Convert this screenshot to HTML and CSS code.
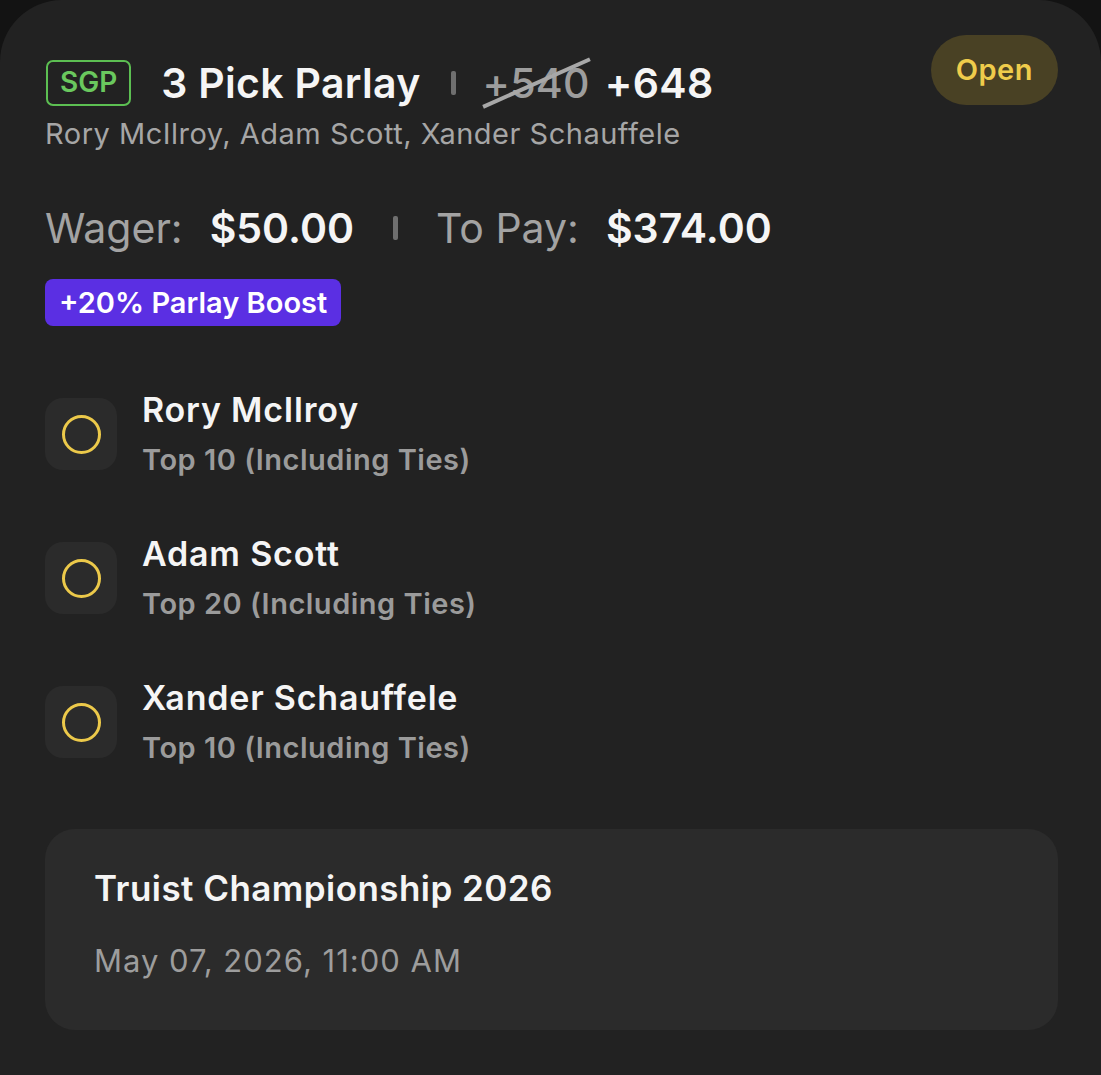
FILE: index.html
```html
<!DOCTYPE html>
<html>
<head>
  <title>Bet Slip</title>
  <link rel="stylesheet" href="styles.css">
</head>
<body>

  <div class="card">
    <div class="header">
      <div class="header-main">
        <div class="title-row">
          <span class="sgp">SGP</span>
          <span class="title">3 Pick Parlay</span>
          <span class="sep title-sep"></span>
          <span class="old-odds">+540</span>
          <span class="odds">+648</span>
        </div>
        <div class="players">Rory McIlroy, Adam Scott, Xander Schauffele</div>
      </div>
      <div class="status">Open</div>
    </div>

    <div class="money-row">
      <span class="label">Wager:</span>
      <span class="amount">$50.00</span>
      <span class="sep"></span>
      <span class="label">To Pay:</span>
      <span class="amount">$374.00</span>
    </div>

    <div class="boost">+20% Parlay Boost</div>

    <div class="legs">
      <div class="leg">
        <div class="leg-icon"><span class="ring"></span></div>
        <div class="leg-text">
          <div class="leg-name">Rory McIlroy</div>
          <div class="leg-market">Top 10 (Including Ties)</div>
        </div>
      </div>
      <div class="leg">
        <div class="leg-icon"><span class="ring"></span></div>
        <div class="leg-text">
          <div class="leg-name">Adam Scott</div>
          <div class="leg-market">Top 20 (Including Ties)</div>
        </div>
      </div>
      <div class="leg">
        <div class="leg-icon"><span class="ring"></span></div>
        <div class="leg-text">
          <div class="leg-name">Xander Schauffele</div>
          <div class="leg-market">Top 10 (Including Ties)</div>
        </div>
      </div>
    </div>

    <div class="event">
      <div class="event-name">Truist Championship 2026</div>
      <div class="event-date">May 07, 2026, 11:00 AM</div>
    </div>
  </div>

</body>
</html>
```

FILE: styles.css
```css
body {
  margin: 0;
  background-color: #131313;
  font-family: Inter, "Noto Sans", sans-serif;
  color: #f5f5f5;
}
.card {
  background-color: #222222;
  border-radius: 62px 62px 0 0;
  min-height: 1075px;
  box-sizing: border-box;
  padding: 35px 43px 0 45px;
}
.header {
  display: flex;
  justify-content: space-between;
  align-items: flex-start;
}
.header-main {
  padding-top: 23px;
}
.title-row {
  display: flex;
  align-items: center;
  height: 50px;
}
.sgp {
  box-sizing: border-box;
  height: 46px;
  border: 2.5px solid #5cbf52;
  border-radius: 7px;
  color: #6ac85e;
  font-size: 28px;
  font-weight: 600;
  padding: 0 12px;
  line-height: 41px;
  margin-left: 1px;
  margin-right: 30px;
}
.title {
  font-size: 41px;
  font-weight: 600;
  letter-spacing: 0.3px;
}
.sep {
  display: inline-block;
  width: 5px;
  height: 24px;
  border-radius: 2px;
  background-color: #6f6f6f;
}
.title-sep {
  margin: 0 27px 0 30px;
}
.old-odds {
  position: relative;
  font-size: 41px;
  font-weight: 500;
  color: #9d9d9d;
  letter-spacing: 0.3px;
  margin-right: 15px;
}
.old-odds::after {
  content: "";
  position: absolute;
  left: -5px;
  right: -5px;
  top: 50%;
  margin-top: -2px;
  height: 4px;
  background-color: #a8a8a8;
  transform: rotate(-24deg);
}
.odds {
  font-size: 41px;
  font-weight: 600;
  letter-spacing: 0.3px;
}
.players {
  margin-top: 8px;
  font-size: 29px;
  letter-spacing: 0.5px;
  color: #a6a6a6;
}
.status {
  background-color: #494124;
  color: #efcc4b;
  font-size: 29px;
  font-weight: 600;
  letter-spacing: 0.5px;
  padding: 0 25px;
  line-height: 70px;
  border-radius: 36px;
}
.money-row {
  display: flex;
  align-items: center;
  margin-top: 52px;
  font-size: 41px;
}
.money-row .label {
  color: #a3a3a3;
  margin-right: 27px;
}
.money-row .amount {
  font-weight: 600;
}
.money-row .sep {
  margin: 0 38px 0 39px;
}
.boost {
  display: inline-block;
  margin-top: 26px;
  background-color: #5b2fe3;
  color: #fff;
  font-size: 29px;
  font-weight: 600;
  padding: 0 14px;
  line-height: 47px;
  border-radius: 8px;
}
.legs {
  margin-top: 63px;
  display: flex;
  flex-direction: column;
  gap: 55px;
}
.leg {
  display: flex;
  align-items: flex-start;
  gap: 25px;
}
.leg-icon {
  width: 72px;
  height: 72px;
  border-radius: 18px;
  background-color: #2b2b2b;
  display: flex;
  align-items: center;
  justify-content: center;
  margin-top: 9px;
}
.ring {
  width: 33px;
  height: 33px;
  border: 3px solid #ecc94a;
  border-radius: 50%;
}
.leg-name {
  font-size: 34px;
  line-height: 42px;
  font-weight: 600;
  letter-spacing: 0.8px;
}
.leg-market {
  margin-top: 11px;
  font-size: 29px;
  line-height: 36px;
  font-weight: 600;
  letter-spacing: 0.5px;
  color: #9b9b9b;
}
.event {
  margin-top: 63px;
  background-color: #2b2b2b;
  border-radius: 30px;
  padding: 38px 49px 51px;
}
.event-name {
  font-size: 35px;
  font-weight: 600;
  letter-spacing: 0.45px;
}
.event-date {
  margin-top: 33px;
  font-size: 31px;
  letter-spacing: 1px;
  color: #9d9d9d;
}
```
